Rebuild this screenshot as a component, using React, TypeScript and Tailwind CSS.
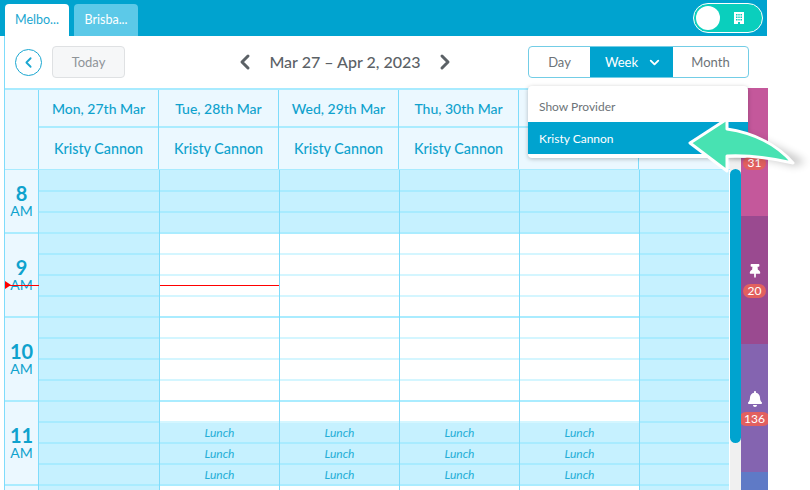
import React from 'react';
import { ChevronLeft, ChevronRight, ChevronDown } from 'lucide-react';
import { FaBell, FaThumbtack } from 'react-icons/fa';

const days = ['Mon, 27th Mar', 'Tue, 28th Mar', 'Wed, 29th Mar', 'Thu, 30th Mar', '', ''];
const hours = [
  { hour: '8', h: 'h-[64px]' },
  { hour: '9', h: 'h-[84px]' },
  { hour: '10', h: 'h-[84px]' },
  { hour: '11', h: 'h-[84px]' },
];
const slotCount = 16;
const hourEnds = [2, 6, 10, 14];
const lunchSlots = [12, 13, 14];

const DayColumn = ({ index }: { index: number }) => {
  const alwaysShaded = index === 0 || index === 5;
  // the body's first column runs a pixel wider than its heading
  const width = index === 0 ? 'w-[121px] border-r border-[#7fdcfb]' : index === 5 ? 'w-[89px]' : 'w-[120px] border-r border-[#7fdcfb]';
  return (
    <div className={`shrink-0 ${width}`}>
      {Array.from({ length: slotCount }).map((_, slot) => {
        const lunch = !alwaysShaded && lunchSlots.includes(slot);
        const shaded = alwaysShaded || slot < 3 || lunch;
        const isHourEnd = hourEnds.includes(slot);
        return (
          <div
            key={slot}
            className={`flex items-center justify-center border-b-2 text-[12px] italic leading-none text-[#25aed6] ${
              slot === 0 ? 'h-[22px]' : 'h-[21px]'
            } ${shaded ? 'bg-[#c6f1ff]' : 'bg-white'} ${
              isHourEnd ? 'border-[#aaecff]' : shaded ? 'border-[#a8ebff]' : 'border-[#d4f6ff]'
            }`}
          >
            {lunch ? 'Lunch' : ''}
          </div>
        );
      })}
    </div>
  );
};

const Badge = ({ children }: { children: React.ReactNode }) => (
  <span className="block shrink-0 rounded-full bg-[#e2605f] px-[5px] text-[12px] leading-[14px] text-white">{children}</span>
);

export default function App() {
  return (
    <div className="relative h-[490px] w-[810px] overflow-hidden bg-white font-['Lato',sans-serif]">
      <div className="flex h-[490px] w-[767px] flex-col">
        {/* top bar */}
        <div className="flex h-[36px] shrink-0 items-end bg-[#00a3cf] pl-[5px]">
          <div className="flex h-[32px] w-[64px] items-center justify-center rounded-t bg-white text-[12.5px] text-[#1aa7d1]">
            Melbo...
          </div>
          <div className="ml-[5px] flex h-[32px] w-[64px] items-center justify-center rounded-t bg-[#5cc9e8] text-[12.5px] text-white">
            Brisba...
          </div>
          <div className="mb-[3px] ml-auto mr-[4px] flex h-[30px] w-[70px] items-center rounded-full border border-white bg-[#0acfbd] pl-[2px]">
            <div className="h-[24px] w-[24px] rounded-full bg-white" />
            <svg viewBox="0 0 10 12" className="ml-[14px] h-[12px] w-[10px]">
              <path
                fill="#fff"
                fillRule="evenodd"
                d="M0 0h10v12H6V10H4v2H0zM2 2v1.5h1.5V2zM4.3 2v1.5h1.4V2zM6.5 2v1.5H8V2zM2 4.5V6h1.5V4.5zM4.3 4.5V6h1.4V4.5zM6.5 4.5V6H8V4.5zM2 7v1.5h1.5V7zM4.3 7v1.5h1.4V7zM6.5 7v1.5H8V7z"
              />
            </svg>
          </div>
        </div>

        <div className="ml-[4px] flex min-h-0 flex-1 flex-col border-l border-[#7fdcfb]">
          {/* toolbar */}
          <div className="flex h-[52px] shrink-0 items-center pl-[10px]">
            <button className="flex h-[27px] w-[27px] items-center justify-center rounded-full border border-[#1aa7d1] text-[#1aa7d1]">
              <ChevronLeft size={17} strokeWidth={2.5} />
            </button>
            <button className="ml-[10px] h-[32px] w-[73px] rounded border border-[#dfe1e3] bg-[#f6f7f8] pt-[1px] text-[13px] text-[#8f9498]">
              Today
            </button>
            <div className="ml-[111px] flex w-[218px] items-center justify-between text-[#5b6166]">
              <ChevronLeft size={24} strokeWidth={3} className="-ml-[3px]" />
              <span className="text-[16px] font-medium">Mar 27 – Apr 2, 2023</span>
              <ChevronRight size={24} strokeWidth={3} className="-mr-[3px]" />
            </div>
            <div className="ml-[74px] flex h-[32px] w-[221px] overflow-hidden rounded border-[1.5px] border-[#73cde6] text-[13px] text-[#6d7378]">
              <div className="flex w-[61px] items-center justify-center pt-[1px]">Day</div>
              <div className="flex w-[83px] items-center justify-center gap-[9px] bg-[#00a3cf] pl-[4px] pt-[1px] text-white">
                Week <ChevronDown size={15} strokeWidth={3} />
              </div>
              <div className="flex flex-1 items-center justify-center pt-[1px]">Month</div>
            </div>
          </div>

          <div className="flex min-h-0 flex-1">
            <div className="relative w-[725px] shrink-0 overflow-hidden">
              {/* column headings */}
              <div className="flex h-[81px] border-t-2 border-[#a8ebff] bg-[#ebf8ff] text-[14px] font-medium text-[#0fa2cd]">
                <div className="w-[34px] shrink-0 border-r border-[#7fdcfb]" />
                {days.map((day, i) => (
                  <div key={i} className={i === 5 ? 'w-[90px] shrink-0' : 'w-[120px] shrink-0 border-r border-[#7fdcfb]'}>
                    <div className="flex h-[38px] items-center justify-center border-b-2 border-[#aaecff]">{day}</div>
                    <div className="flex h-[41px] items-center justify-center text-[14.3px]">{i < 4 ? 'Kristy Cannon' : ''}</div>
                  </div>
                ))}
              </div>
              {/* slots */}
              <div className="relative flex border-t border-[#a8ebff]">
                <div className="w-[34px] shrink-0 border-r border-[#7fdcfb] bg-[#ebf8ff] text-[#0fa2cd]">
                  {hours.map((item) => (
                    <div
                      key={item.hour}
                      className={`flex flex-col items-center justify-center border-b-2 border-[#aaecff] ${item.h}`}
                    >
                      <span className="text-[20px] font-bold leading-[18px]">{item.hour}</span>
                      <span className="text-[14px] leading-[17px]">AM</span>
                    </div>
                  ))}
                </div>
                {days.map((_, i) => (
                  <DayColumn key={i} index={i} />
                ))}
                <div className="absolute left-0 top-[115px] h-0 w-[34px] border-t border-[#f00]" />
                <div className="absolute left-[155px] top-[115px] h-0 w-[119px] border-t border-[#f00]" />
                <div className="absolute left-0 top-[111px] h-0 w-0 border-y-[4px] border-l-[6px] border-y-transparent border-l-[#f00]" />
              </div>
            </div>

            {/* scrollbar */}
            <div className="w-[11px] shrink-0 bg-[#f0f0f0] pt-[81px]">
              <div className="h-[274px] rounded-b-full rounded-t-full bg-[#00a3cf]" />
            </div>

            {/* side rail */}
            <div className="flex w-[27px] shrink-0 flex-col overflow-hidden text-white">
              <div className="flex h-[128px] shrink-0 flex-col items-center justify-end bg-[#c4589b] pb-[46px]">
                <Badge>31</Badge>
              </div>
              <div className="flex h-[128px] shrink-0 flex-col items-center bg-[#9a4a90] pt-[48px]">
                <FaThumbtack size={14} />
                <div className="mt-[6px]"><Badge>20</Badge></div>
              </div>
              <div className="flex h-[128px] shrink-0 flex-col items-center bg-[#8464b0] pt-[47px]">
                <FaBell size={16} />
                <div className="mt-[5px]"><Badge>136</Badge></div>
              </div>
              <div className="flex-1 bg-[#5f7ac6]" />
            </div>
          </div>
        </div>
      </div>

      {/* view dropdown */}
      <div className="absolute left-[528px] top-[86px] h-[72px] w-[220px] rounded-sm bg-white shadow-[0_1px_4px_rgba(0,0,0,0.25)]">
        <div className="flex h-[36px] items-center px-[11px] pt-[5px] text-[12px] text-[#6d7378]">Show Provider</div>
        <div className="flex h-[32px] items-center bg-[#00a3cf] px-[11px] pt-[2px] text-[12px] text-white">Kristy Cannon</div>
      </div>

      {/* callout arrow */}
      <svg viewBox="0 0 810 490" className="pointer-events-none absolute left-0 top-0 h-[490px] w-[810px]">
        <defs>
          <filter id="arrowShadow" x="-30%" y="-30%" width="170%" height="170%">
            <feGaussianBlur stdDeviation="4" />
          </filter>
        </defs>
        <path
          d="M730 132C760 138 785 150 806 162L794 166C775 160 750 156 730 156Z"
          fill="#000"
          opacity="0.22"
          filter="url(#arrowShadow)"
        />
        <path
          d="M690 143L727 119L727 129C755 133 778 146 793 163C772 158 750 155 727 156L727 171Z"
          fill="#48e2b2"
          stroke="#fff"
          strokeWidth="3"
          strokeLinejoin="round"
        />
      </svg>
    </div>
  );
}
